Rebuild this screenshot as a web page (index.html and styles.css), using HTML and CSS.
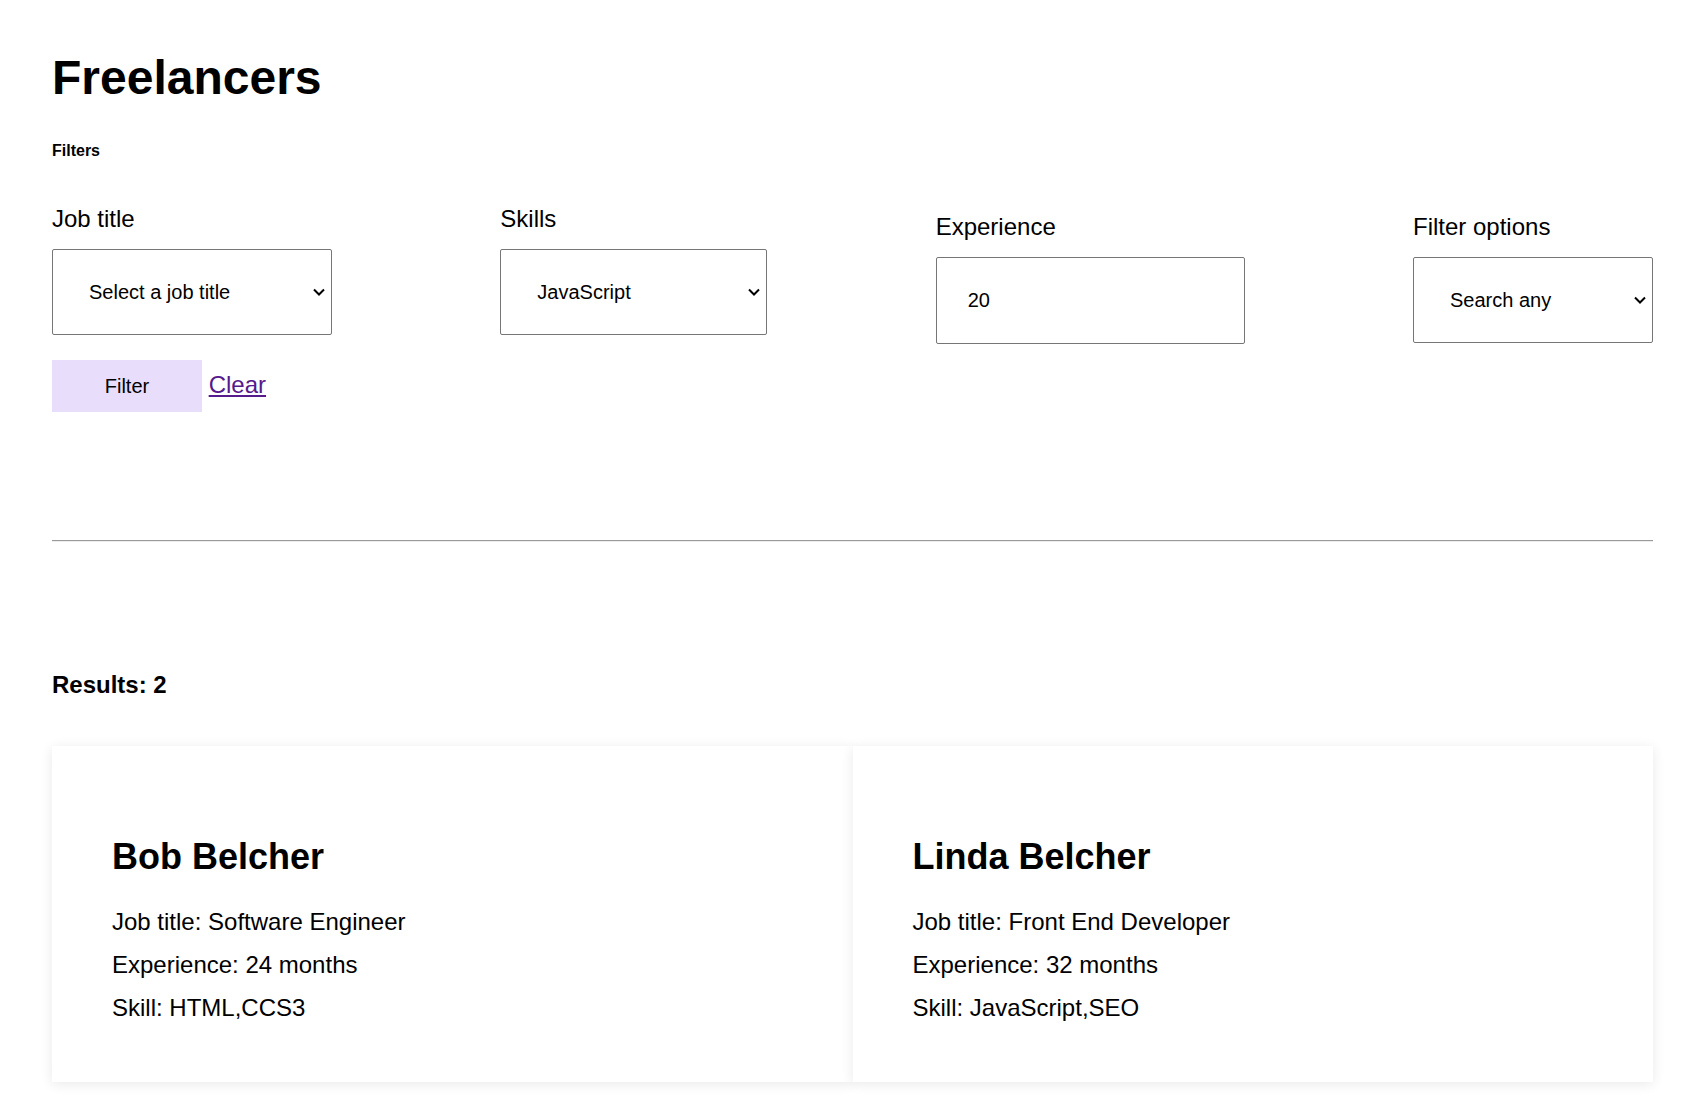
FILE: index.html
```html
<!DOCTYPE html>
<html lang="en">
<head>
<meta charset="utf-8">
<title>Freelancers</title>
<link rel="stylesheet" href="styles.css">
</head>
<body>
<main class="page">
  <h1 class="page-title">Freelancers</h1>
  <h6 class="filters-heading">Filters</h6>
  <form class="filters">
    <div class="filter-row">
      <div class="filter-group filter-group--job">
        <label class="filter-label" for="job">Job title</label>
        <div class="select-wrap">
          <select id="job" class="select">
            <option>Select a job title</option>
          </select>
          <svg class="chevron" width="12" height="8" viewBox="0 0 12 8" aria-hidden="true"><path d="M1 1.5l5 5 5-5" fill="none" stroke="#000" stroke-width="2"/></svg>
        </div>
      </div>
      <div class="filter-group filter-group--skills">
        <label class="filter-label" for="skills">Skills</label>
        <div class="select-wrap">
          <select id="skills" class="select">
            <option>JavaScript</option>
          </select>
          <svg class="chevron" width="12" height="8" viewBox="0 0 12 8" aria-hidden="true"><path d="M1 1.5l5 5 5-5" fill="none" stroke="#000" stroke-width="2"/></svg>
        </div>
      </div>
      <div class="filter-group filter-group--exp filter-group--low">
        <label class="filter-label" for="exp">Experience</label>
        <input id="exp" class="text-input" type="text" value="20">
      </div>
      <div class="filter-group filter-group--opts filter-group--low">
        <label class="filter-label" for="opts">Filter options</label>
        <div class="select-wrap">
          <select id="opts" class="select">
            <option>Search any</option>
          </select>
          <svg class="chevron" width="12" height="8" viewBox="0 0 12 8" aria-hidden="true"><path d="M1 1.5l5 5 5-5" fill="none" stroke="#000" stroke-width="2"/></svg>
        </div>
      </div>
    </div>
    <div class="actions"><button type="button" class="btn-filter">Filter</button> <a href="#" class="link-clear">Clear</a></div>
  </form>
  <hr class="divider">
  <h4 class="results">Results: 2</h4>
  <section class="cards">
    <article class="card">
      <h2 class="card-name">Bob Belcher</h2>
      <p class="card-line">Job title: Software Engineer</p>
      <p class="card-line">Experience: 24 months</p>
      <p class="card-line">Skill: HTML,CCS3</p>
    </article>
    <article class="card">
      <h2 class="card-name">Linda Belcher</h2>
      <p class="card-line">Job title: Front End Developer</p>
      <p class="card-line">Experience: 32 months</p>
      <p class="card-line">Skill: JavaScript,SEO</p>
    </article>
  </section>
</main>
</body>
</html>
```
FILE: styles.css
```css
* { box-sizing: border-box; }

html, body {
  margin: 0;
  background: #fff;
  color: #000;
  font-family: "Liberation Sans", Arial, sans-serif;
}

.page {
  padding: 50px 45px 40px 52px;
}

.page-title {
  margin: 0;
  font-size: 48px;
  line-height: 55px;
  font-weight: 700;
}

.filters-heading {
  margin: 37px 0 0;
  font-size: 16px;
  line-height: 18px;
  font-weight: 700;
}

.filters {
  margin-top: 45px;
}

.filter-row {
  display: flex;
  justify-content: space-between;
  align-items: flex-start;
}

.filter-group {
  display: flex;
  flex-direction: column;
}

.filter-group--low {
  margin-top: 8px;
}

.filter-label {
  font-size: 24px;
  line-height: 28px;
  margin-bottom: 16px;
}

.select-wrap {
  position: relative;
}

.select {
  -webkit-appearance: none;
  appearance: none;
  display: block;
  height: 86px;
  padding: 0 36px;
  border: 1px solid #767676;
  border-radius: 2px;
  background: #fff;
  color: #000;
  font-family: "Liberation Sans", Arial, sans-serif;
  font-size: 20px;
  outline: none;
}

.filter-group--job .select { width: 280px; }
.filter-group--skills .select { width: 267px; }
.filter-group--opts .select { width: 240px; }

.chevron {
  position: absolute;
  right: 7px;
  top: 50%;
  transform: translateY(-50%);
  pointer-events: none;
}

.text-input {
  display: block;
  width: 309px;
  height: 87px;
  padding: 0 31px;
  border: 1px solid #767676;
  border-radius: 2px;
  background: #fff;
  color: #000;
  font-family: "Liberation Sans", Arial, sans-serif;
  font-size: 20px;
  outline: none;
}

.actions {
  margin-top: 16px;
  font-size: 24px;
}

.btn-filter {
  width: 150px;
  height: 52px;
  border: none;
  background: #e9ddfc;
  color: #000;
  font-family: "Liberation Sans", Arial, sans-serif;
  font-size: 20px;
  vertical-align: baseline;
  padding: 0;
}

.link-clear {
  color: #551a8b;
  text-decoration: underline;
}

.divider {
  margin: 128px 0 0;
  height: 0;
  border: none;
  border-top: 1px solid #9a9a9a;
  border-bottom: 1px solid #ededed;
}

.results {
  margin: 129px 0 0;
  font-size: 24px;
  line-height: 28px;
  font-weight: 700;
}

.cards {
  margin-top: 47px;
  display: grid;
  grid-template-columns: 1fr 1fr;
}

.card {
  background: #fff;
  padding: 60px 60px 53px;
  box-shadow: 0 2px 12px rgba(0, 0, 0, 0.09);
}

.card-name {
  margin: 30px 0 23px;
  font-size: 36px;
  line-height: 41px;
  font-weight: 700;
}

.card-line {
  margin: 0;
  font-size: 24px;
  line-height: 43px;
}
```
